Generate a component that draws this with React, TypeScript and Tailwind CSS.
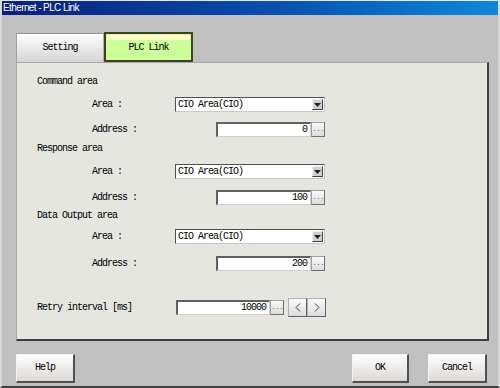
import React from 'react';

const mono = { fontFamily: '"Liberation Mono", "DejaVu Sans Mono", monospace' };

function SelectBox({ value }: { value: string }) {
  return (
    <div className="flex h-[15px] w-[150px] items-center justify-between border-l border-t border-l-[#505050] border-t-[#505050] border-b border-r border-b-[#c8c8c8] border-r-[#c8c8c8] bg-white pl-[2px] pr-[1px]">
      <span className="whitespace-nowrap text-[10px] leading-none tracking-[-1px] text-black">{value}</span>
      <div className="flex h-[11px] w-[11px] items-center justify-center border-b border-r border-b-[#404040] border-r-[#404040] border-l border-t border-l-[#f0f0f0] border-t-[#f0f0f0] bg-[#d0d0d0]">
        <svg width="7" height="4" viewBox="0 0 7 4">
          <path d="M0 0 L7 0 L3.5 4 Z" fill="#202020" />
        </svg>
      </div>
    </div>
  );
}

function DotsButton() {
  return (
    <div className="flex h-[15px] w-[14px] items-center justify-center border border-[#a0a0a0] border-b-[#707070] border-r-[#707070] bg-gradient-to-b from-[#fafafa] to-[#dcdcdc] pb-[2px]">
      <span className="text-[8px] leading-none tracking-[-1px] text-[#707070]">...</span>
    </div>
  );
}

function NumberInput({ value, width }: { value: string; width: string }) {
  return (
    <div className="flex items-center">
      <div
        className={`flex h-[15px] ${width} items-center justify-end border-l-2 border-t-2 border-l-[#606060] border-t-[#606060] border-b border-r border-b-[#d0d0d0] border-r-[#d0d0d0] bg-white pr-[3px]`}
      >
        <span className="text-[10px] leading-none tracking-[-1px] text-black">{value}</span>
      </div>
      <DotsButton />
    </div>
  );
}

function ArrowButton({ dir }: { dir: 'left' | 'right' }) {
  return (
    <div className="flex h-[19px] w-[19px] items-center justify-center border border-[#b0b0b0] border-b-[#606060] border-r-[#606060] bg-gradient-to-b from-[#fafafa] to-[#dcdcdc]">
      <svg width="6" height="9" viewBox="0 0 6 9">
        {dir === 'left' ? (
          <path d="M5 0.5 L1 4.5 L5 8.5" stroke="#404040" strokeWidth="1" fill="none" />
        ) : (
          <path d="M1 0.5 L5 4.5 L1 8.5" stroke="#404040" strokeWidth="1" fill="none" />
        )}
      </svg>
    </div>
  );
}

function Header({ text, mt }: { text: string; mt: string }) {
  return (
    <div className={`flex h-[14px] items-center pl-[20px] ${mt}`}>
      <span className="whitespace-nowrap text-[10px] leading-none tracking-[-1px] text-black">{text}</span>
    </div>
  );
}

function AreaRow({ mt }: { mt: string }) {
  return (
    <div className={`flex h-[15px] items-center ${mt}`}>
      <span className="w-[158px] shrink-0 whitespace-nowrap pl-[75px] text-[10px] leading-none tracking-[-1px] text-black">
        Area :
      </span>
      <SelectBox value="CIO Area(CIO)" />
    </div>
  );
}

function AddressRow({ value, mt }: { value: string; mt: string }) {
  return (
    <div className={`flex h-[15px] items-center ${mt}`}>
      <span className="w-[199px] shrink-0 whitespace-nowrap pl-[75px] text-[10px] leading-none tracking-[-1px] text-black">
        Address :
      </span>
      <NumberInput value={value} width="w-[95px]" />
    </div>
  );
}

function DialogButton({ label, width }: { label: string; width: string }) {
  return (
    <div
      className={`flex h-[29px] ${width} items-center justify-center border-l border-t border-l-[#f4f4f4] border-t-[#f4f4f4] border-b-2 border-r-2 border-b-[#505050] border-r-[#505050] bg-gradient-to-b from-[#ffffff] to-[#dcd8d4]`}
    >
      <span className="text-[10px] leading-none tracking-[-1px] text-black">{label}</span>
    </div>
  );
}

export default function App() {
  return (
    <div
      className="flex h-[388px] w-[500px] flex-col overflow-hidden border-b-2 border-l-2 border-r-2 border-b-[#404040] border-l-[#d8d8d8] border-r-[#d8d8d8] border-t border-t-[#e8e8e8] bg-[#c0c0c0]"
      style={mono}
    >
      {/* title bar */}
      <div className="-ml-[2px] -mr-[2px] flex h-[14px] items-center bg-gradient-to-r from-[#0a1e7a] via-[#0a4aa8] to-[#1088d6] pl-[3px]">
        <span
          className="text-[10px] leading-none tracking-[-0.6px] text-white"
          style={{ fontFamily: '"Liberation Sans", Arial, sans-serif' }}
        >
          Ethernet - PLC Link
        </span>
      </div>

      {/* tabs */}
      <div className="mt-[18px] flex pl-[14px]">
        <div className="flex h-[29px] w-[88px] items-center justify-center border-l border-t border-l-[#a0a0a0] border-t-[#909090] border-r border-r-[#b0b0b0] bg-gradient-to-b from-[#ffffff] to-[#d4d4d4]">
          <span className="text-[10px] leading-none tracking-[-1px] text-black">Setting</span>
        </div>
        <div className="-mt-[1px] flex h-[30px] w-[89px] flex-col border-2 border-[#404020] bg-[#ccff99]">
          <div className="mx-[1px] mt-[1px] h-[5px] bg-[#ffffcc]" />
          <div className="flex flex-1 items-center justify-center pb-[4px]">
            <span className="text-[10px] leading-none tracking-[-1px] text-black">PLC Link</span>
          </div>
        </div>
      </div>

      {/* panel */}
      <div className="ml-[14px] flex h-[279px] w-[473px] flex-col border-l border-t border-l-[#a8a8a8] border-t-[#a8a8a8] border-b-2 border-r-2 border-b-[#404040] border-r-[#404040] bg-[#e6e6e0]">
        <Header text="Command area" mt="mt-[12px]" />
        <AreaRow mt="mt-[8px]" />
        <AddressRow value="0" mt="mt-[10px]" />
        <Header text="Response area" mt="mt-[5px]" />
        <AreaRow mt="mt-[8px]" />
        <AddressRow value="100" mt="mt-[11px]" />
        <Header text="Data Output area" mt="mt-[4px]" />
        <AreaRow mt="mt-[6px]" />
        <AddressRow value="200" mt="mt-[12px]" />
        <div className="mt-[27px] flex h-[19px] items-center">
          <span className="w-[159px] shrink-0 whitespace-nowrap pl-[20px] text-[10px] leading-none tracking-[-1px] text-black">
            Retry interval [ms]
          </span>
          <NumberInput value="10000" width="w-[94px]" />
          <div className="ml-[4px] flex">
            <ArrowButton dir="left" />
            <ArrowButton dir="right" />
          </div>
        </div>
      </div>

      {/* bottom buttons */}
      <div className="mt-[13px] flex pl-[14px] pr-[11px]">
        <DialogButton label="Help" width="w-[59px]" />
        <div className="ml-auto flex gap-[19px]">
          <DialogButton label="OK" width="w-[57px]" />
          <DialogButton label="Cancel" width="w-[59px]" />
        </div>
      </div>
    </div>
  );
}
